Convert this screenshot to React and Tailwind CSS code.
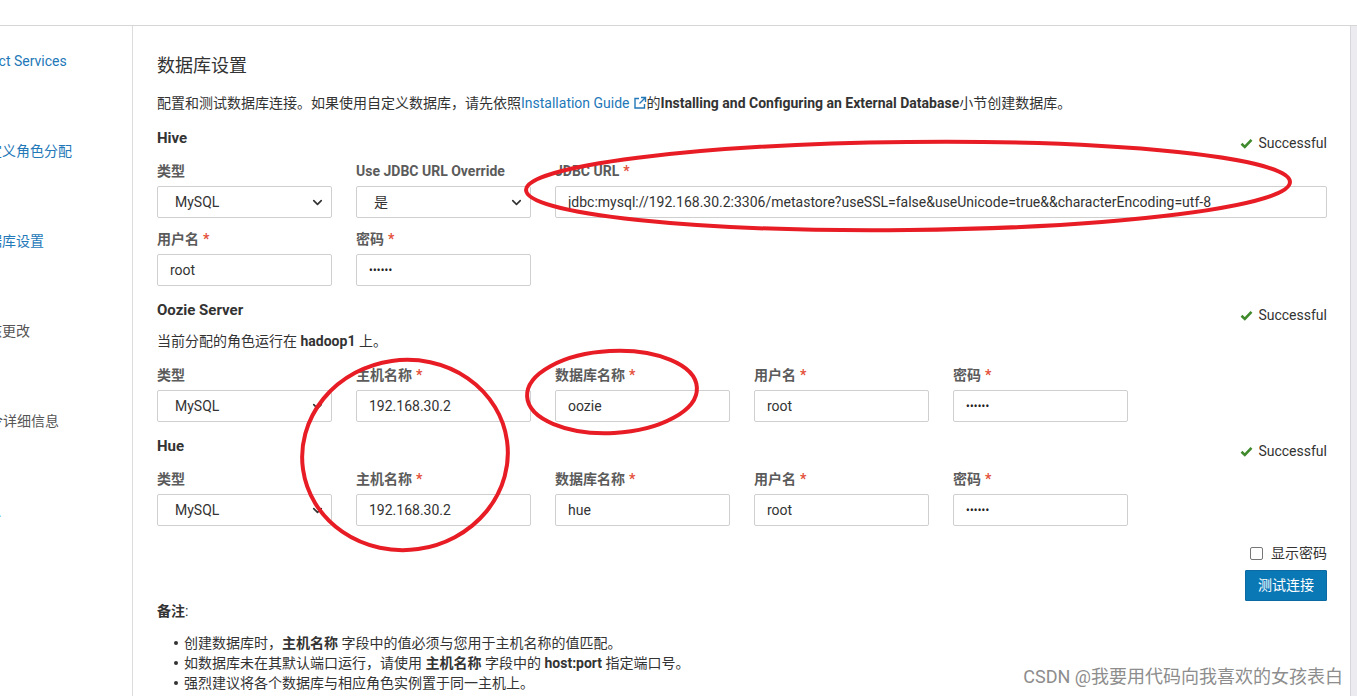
import React from "react";
import { ChevronDown } from "lucide-react";

const font = { fontFamily: 'Roboto, "Noto Sans CJK SC", sans-serif' };

const Check = () => (
  <svg width="13" height="11" viewBox="0 0 13 11" className="mr-[5px]">
    <path d="M1.5 5.8 L4.8 9 L11.5 1.8" fill="none" stroke="#3f8a2c" strokeWidth="2.6" />
  </svg>
);

const Successful = () => (
  <div className="flex items-center pt-[5px] text-[14px] leading-[20px] text-[#333]">
    <Check />
    Successful
  </div>
);

const Label = ({ text, req }) => (
  <div className="text-[14px] leading-[20px] font-bold text-[#5b5b5b] mb-[5px] whitespace-nowrap">
    {text}
    {req && <span className="text-[#e4503b] ml-[4px]">*</span>}
  </div>
);

const Input = ({ value, pw }) => (
  <div className="h-[32px] border border-[#cfcfcf] rounded-[2px] px-[12px] flex items-center text-[14px] text-[#333] bg-white whitespace-nowrap overflow-hidden">
    {pw ? <span className="text-[10px] font-bold tracking-[0.3px] text-[#222]">••••••</span> : value}
  </div>
);

const Select = ({ value }) => (
  <div className="h-[32px] border border-[#cfcfcf] rounded-[2px] pl-[17px] pr-[6px] flex items-center justify-between text-[14px] text-[#333] bg-white">
    <span>{value}</span>
    <ChevronDown size={15} strokeWidth={2.6} color="#333" />
  </div>
);

const Field = ({ label, req, children }) => (
  <div>
    <Label text={label} req={req} />
    {children}
  </div>
);

const Header = ({ title }) => (
  <div className="flex justify-between items-start h-[25px]">
    <div className="text-[15px] leading-[20px] font-bold text-[#333]">{title}</div>
    <Successful />
  </div>
);

const FiveRow = ({ db }) => (
  <div className="grid grid-cols-[175px_175px_175px_175px_175px] gap-x-[24px]">
    <Field label="类型">
      <Select value="MySQL" />
    </Field>
    <Field label="主机名称" req>
      <Input value="192.168.30.2" />
    </Field>
    <Field label="数据库名称" req>
      <Input value={db} />
    </Field>
    <Field label="用户名" req>
      <Input value="root" />
    </Field>
    <Field label="密码" req>
      <Input pw />
    </Field>
  </div>
);

const sideItems = [
  { text: "Select Services", ml: "ml-[-28px]", color: "text-[#2378b8]" },
  { text: "自定义角色分配", ml: "ml-[-26px]", color: "text-[#2378b8]" },
  { text: "数据库设置", ml: "ml-[-26px]", color: "text-[#2378b8]" },
  { text: "审核更改", ml: "ml-[-26px]", color: "text-[#555]" },
  { text: "命令详细信息", ml: "ml-[-25px]", color: "text-[#555]" },
  { text: "汇总", ml: "ml-[-27px]", color: "text-[#2378b8]" },
];

const Bullet = ({ children }) => (
  <li className="flex items-center">
    <span className="ml-[17px] mr-[6px] w-[4px] h-[4px] rounded-full bg-[#333] shrink-0" />
    <span>{children}</span>
  </li>
);

export default function App() {
  return (
    <div className="relative w-[1357px] h-[696px] overflow-hidden bg-white flex flex-col" style={font}>
      <div className="h-[26px] border-b border-[#d6d6d6] shrink-0" />
      <div className="flex flex-1 min-h-0">
        {/* sidebar */}
        <div className="w-[133px] shrink-0 border-r border-[#dcdcdc] overflow-hidden pt-[25px] flex flex-col gap-[70px]">
          {sideItems.map((s) => (
            <div key={s.text} className={`text-[14px] leading-[20px] whitespace-nowrap ${s.ml} ${s.color}`}>
              {s.text}
            </div>
          ))}
        </div>

        {/* main */}
        <div className="flex-1 pl-[24px] pr-[23px] pt-[28px] text-[#333]">
          <div className="text-[18px] leading-[24px] text-[#333]">数据库设置</div>
          <div className="mt-[15px] text-[14px] leading-[20px] whitespace-nowrap flex items-center">
            配置和测试数据库连接。如果使用自定义数据库，请先依照
            <span className="text-[#2378b8]">Installation Guide</span>
            <svg width="14" height="14" viewBox="0 0 14 14" className="ml-[3px]">
              <path d="M6 2.5 H2 V12 H11.5 V8" fill="none" stroke="#2378b8" strokeWidth="1.4" />
              <path d="M8 1.5 H12.5 V6 M12.5 1.5 L6.5 7.5" fill="none" stroke="#2378b8" strokeWidth="1.4" />
            </svg>
            的<span className="font-bold">Installing and Configuring an External Database</span>小节创建数据库。
          </div>

          {/* Hive */}
          <div className="mt-[15px]">
            <Header title="Hive" />
            <div className="mt-[8px] grid grid-cols-[175px_175px_1fr] gap-x-[24px]">
              <Field label="类型">
                <Select value="MySQL" />
              </Field>
              <Field label="Use JDBC URL Override">
                <Select value="是" />
              </Field>
              <Field label="JDBC URL" req>
                <Input value="jdbc:mysql://192.168.30.2:3306/metastore?useSSL=false&useUnicode=true&&characterEncoding=utf-8" />
              </Field>
            </div>
            <div className="mt-[11px] grid grid-cols-[175px_175px] gap-x-[24px]">
              <Field label="用户名" req>
                <Input value="root" />
              </Field>
              <Field label="密码" req>
                <Input pw />
              </Field>
            </div>
          </div>

          {/* Oozie */}
          <div className="mt-[14px]">
            <Header title="Oozie Server" />
            <div className="mt-[6px] text-[14px] leading-[20px]">
              当前分配的角色运行在 <span className="font-bold">hadoop1</span> 上。
            </div>
            <div className="mt-[14px]">
              <FiveRow db="oozie" />
            </div>
          </div>

          {/* Hue */}
          <div className="mt-[14px]">
            <Header title="Hue" />
            <div className="mt-[8px]">
              <FiveRow db="hue" />
            </div>
          </div>

          <div className="mt-[17px] flex flex-col items-end">
            <label className="flex items-center text-[14px] leading-[20px] text-[#333]">
              <span className="w-[13px] h-[13px] border border-[#767676] rounded-[2px] mr-[8px] bg-white" />
              显示密码
            </label>
            <button className="mt-[7px] h-[31px] w-[82px] bg-[#0b78b6] border border-[#0a6aa1] text-white text-[14px] rounded-[1px]">
              测试连接
            </button>
          </div>

          <div className="text-[14px] leading-[20px]">
            <span className="font-bold">备注</span>:
          </div>
          <ul className="mt-[12px] text-[14px] leading-[20px] text-[#333]">
            <Bullet>
              创建数据库时，<span className="font-bold">主机名称</span> 字段中的值必须与您用于主机名称的值匹配。
            </Bullet>
            <Bullet>
              如数据库未在其默认端口运行，请使用 <span className="font-bold">主机名称</span> 字段中的{" "}
              <span className="font-bold">host:port</span> 指定端口号。
            </Bullet>
            <Bullet>强烈建议将各个数据库与相应角色实例置于同一主机上。</Bullet>
          </ul>
        </div>

        <div className="w-[7px] shrink-0 border-l border-[#d8d8dc] bg-[#ececf0]" />
      </div>

      {/* annotations */}
      <svg className="absolute left-0 top-0 pointer-events-none" width="1357" height="696">
        <ellipse cx="908" cy="186" rx="382" ry="44" fill="none" stroke="#e81c24" strokeWidth="4" transform="rotate(-0.6 908 186)" />
        <ellipse cx="405" cy="455" rx="103" ry="95" fill="none" stroke="#e81c24" strokeWidth="4" transform="rotate(-8 405 455)" />
        <ellipse cx="612" cy="392" rx="85" ry="41" fill="none" stroke="#e81c24" strokeWidth="4" transform="rotate(-3 612 392)" />
      </svg>

      <div className="absolute right-[14px] bottom-[7px] text-[18px] leading-[24px] text-[#8d8d8d] whitespace-nowrap">
        CSDN @我要用代码向我喜欢的女孩表白
      </div>
    </div>
  );
}
